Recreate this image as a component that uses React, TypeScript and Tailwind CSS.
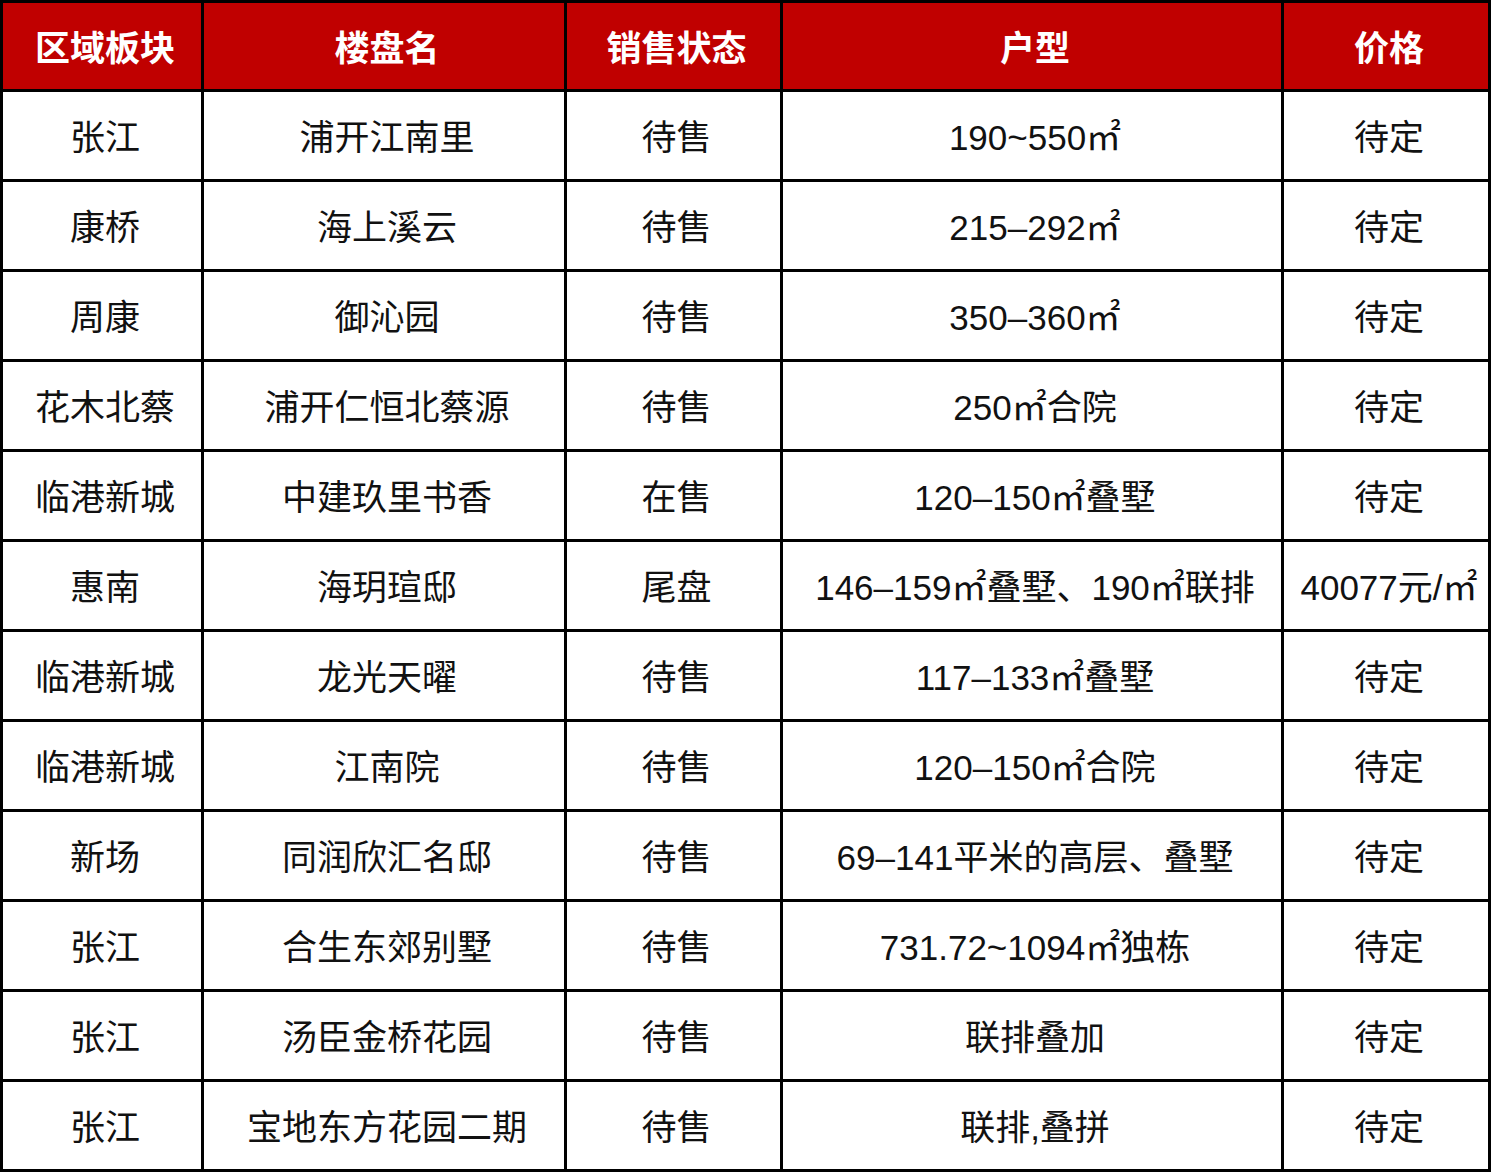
const headers = ["区域板块", "楼盘名", "销售状态", "户型", "价格"];

const rows = [
  ["张江", "浦开江南里", "待售", "190~550㎡", "待定"],
  ["康桥", "海上溪云", "待售", "215–292㎡", "待定"],
  ["周康", "御沁园", "待售", "350–360㎡", "待定"],
  ["花木北蔡", "浦开仁恒北蔡源", "待售", "250㎡合院", "待定"],
  ["临港新城", "中建玖里书香", "在售", "120–150㎡叠墅", "待定"],
  ["惠南", "海玥瑄邸", "尾盘", "146–159㎡叠墅、190㎡联排", "40077元/㎡"],
  ["临港新城", "龙光天曜", "待售", "117–133㎡叠墅", "待定"],
  ["临港新城", "江南院", "待售", "120–150㎡合院", "待定"],
  ["新场", "同润欣汇名邸", "待售", "69–141平米的高层、叠墅", "待定"],
  ["张江", "合生东郊别墅", "待售", "731.72~1094㎡独栋", "待定"],
  ["张江", "汤臣金桥花园", "待售", "联排叠加", "待定"],
  ["张江", "宝地东方花园二期", "待售", "联排,叠拼", "待定"],
];

export default function App() {
  return (
    <div className="w-[1492px] bg-white">
      <div className="grid w-[1491px] grid-cols-[198px_360px_213px_498px_204px] grid-rows-[86px_repeat(12,87px)] gap-[3px] bg-black p-[3px] font-['Liberation_Sans','Noto_Sans_CJK_SC',sans-serif] text-[35px]">
        {headers.map((h) => (
          <div
            key={h}
            className="flex items-center justify-center bg-[#c00000] pl-[6px] pt-[6px] font-bold text-white"
          >
            {h}
          </div>
        ))}
        {rows.map((row, i) =>
          row.map((cell, j) => (
            <div
              key={`${i}-${j}`}
              className="flex items-center justify-center whitespace-nowrap bg-white pl-[6px] pt-[6px] text-[#111]"
            >
              {cell}
            </div>
          ))
        )}
      </div>
    </div>
  );
}
